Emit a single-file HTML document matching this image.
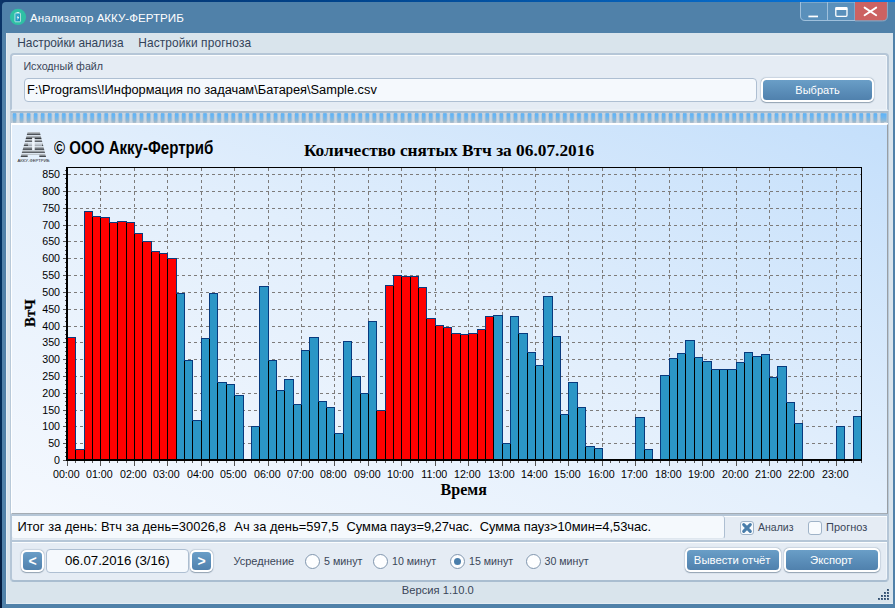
<!DOCTYPE html>
<html><head><meta charset="utf-8"><title>Анализатор АККУ-ФЕРТРИБ</title>
<style>
html,body{margin:0;padding:0;}
body{width:895px;height:608px;overflow:hidden;position:relative;font-family:"Liberation Sans",sans-serif;background:#5081a9;}
</style></head><body>
<div style="position:absolute;left:0px;top:0px;width:895px;height:608px;background:#0b3365;"></div>
<div style="position:absolute;left:2px;top:2px;width:893px;height:606px;background:#5081a9;border-top-left-radius:4px;"></div>
<div style="position:absolute;left:0px;top:0px;width:895px;height:2px;background:linear-gradient(90deg,#0a3166 0%,#00428a 36%,#0560b8 72%,#0a7ae0 100%);"></div>
<div style="position:absolute;left:0px;top:0px;width:2px;height:608px;background:linear-gradient(180deg,#0b3468 0%,#00305e 45%,#022a55 75%,#03183a 100%);"></div>
<svg style="position:absolute;left:9px;top:8px" width="18" height="18" viewBox="0 0 18 18">
<defs><linearGradient id="icB" x1="0" y1="0" x2="1" y2="1"><stop offset="0" stop-color="#38b4cf"/><stop offset="1" stop-color="#1486b8"/></linearGradient></defs>
<circle cx="9" cy="8.9" r="8.1" fill="#2fc0a4"/>
<rect x="7.6" y="4" width="2.5" height="1.4" fill="#dff6f1"/>
<rect x="5.9" y="5.1" width="5.6" height="8.7" rx="0.5" fill="url(#icB)" stroke="#c9eee8" stroke-width="0.8"/>
<path d="M9.5 7.2 L7.7 9.6 L8.8 9.7 L8.3 11.9 L10.3 9.2 L9.1 9.1 Z" fill="#fff"/>
</svg>
<div style="position:absolute;top:10px;font-size:11.6px;line-height:16px;color:#fff;white-space:pre;left:30px;">Анализатор АККУ-ФЕРТРИБ</div>
<svg style="position:absolute;left:800px;top:2px" width="90" height="21" viewBox="0 0 90 21">
<path d="M0.5 0 V14 Q0.5 18.5 5 18.5 H55 V0 Z" fill="#5a90bb" stroke="#9fc0dc" stroke-width="1"/>
<path d="M55 0 H87 V14 Q87 18.5 82.5 18.5 H55 Z" fill="#cc6262"/>
<path d="M87.4 0 V14 Q87.4 18.9 82.5 18.9 H55" fill="none" stroke="#9fb6cc" stroke-width="0.8"/>
<line x1="27.5" y1="0" x2="27.5" y2="18" stroke="#9fc0dc" stroke-width="1"/>
<rect x="8.4" y="13.6" width="9.6" height="1.7" fill="#fff"/>
<rect x="35.8" y="5.7" width="11.2" height="8.6" rx="1" fill="none" stroke="#fff" stroke-width="1.3"/>
<rect x="35.5" y="5.2" width="11.8" height="2.8" fill="#fff"/>
<path d="M64.6 5.6 L76.2 13.2 M76.2 5.6 L64.6 13.2" stroke="#fff" stroke-width="1.9" stroke-linecap="round"/>
</svg>
<div style="position:absolute;left:6px;top:33px;width:887px;height:571px;background:#d9e4ec;box-shadow:inset 1px 0 0 #e4ecf3, inset 0 -1px 0 #e4ecf3;"></div>
<div style="position:absolute;top:34px;font-size:11.9px;line-height:18px;color:#33435a;white-space:pre;letter-spacing:-0.05px;left:17.3px;">Настройки анализа</div>
<div style="position:absolute;top:34px;font-size:11.9px;line-height:18px;color:#33435a;white-space:pre;letter-spacing:0.13px;left:138.2px;">Настройки прогноза</div>
<div style="position:absolute;left:10px;top:53px;width:879px;height:58px;background:#e5ecf4;border:2px solid #b5c6d7;border-radius:4px;box-sizing:border-box;box-shadow:inset 0 1px 0 0 #fbfdfe, inset -1px 0 0 0 #f0f5fa;border-bottom-color:#eaf0f6;border-bottom-left-radius:0;border-bottom-right-radius:0;"></div>
<div style="position:absolute;top:58px;font-size:10.7px;line-height:16px;color:#3a4658;white-space:pre;left:23.4px;">Исходный файл</div>
<div style="position:absolute;left:24px;top:78px;width:733px;height:24px;background:#f5f9fd;border:1px solid #aebfd2;border-radius:4px;box-sizing:border-box;"></div>
<div style="position:absolute;top:80px;font-size:12.82px;line-height:19px;color:#000;white-space:pre;left:27px;">F:\Programs\!Информация по задачам\Батарея\Sample.csv</div>
<div style="position:absolute;left:761px;top:78px;width:113px;height:24px;background:#fff;border-radius:5px;box-shadow:0 0 1.5px rgba(90,120,150,0.7),0 0.6px 1px rgba(70,90,110,0.45);"></div>
<div style="position:absolute;left:763px;top:80px;width:109px;height:20px;background:linear-gradient(180deg,#6a9ec7 0%,#5c8fba 50%,#5081ad 100%);border-radius:3.5px;"></div>
<div style="position:absolute;top:82px;font-size:11px;line-height:16px;color:#fff;white-space:pre;left:617.5px;width:400px;text-align:center;">Выбрать</div>
<div style="position:absolute;left:10px;top:111px;width:1px;height:404px;background:#b8c9d9;"></div>
<div style="position:absolute;left:888px;top:111px;width:1px;height:404px;background:#b8c9d9;"></div>
<div style="position:absolute;left:11px;top:111px;width:877px;height:13px;background:#a9bccd;border-bottom:1px solid #b4c5d5;box-sizing:border-box;"></div>
<svg style="position:absolute;left:11px;top:111px" width="877" height="13" viewBox="0 0 877 13">
<defs><linearGradient id="sgB" x1="0" y1="0" x2="0" y2="1"><stop offset="0" stop-color="#5bb3f9"/><stop offset="0.45" stop-color="#6db6f0"/><stop offset="1" stop-color="#9ab9cc"/></linearGradient>
<pattern id="sgP" x="1.75" y="0" width="7.056" height="13" patternUnits="userSpaceOnUse"><rect x="0" y="2.3" width="3.5" height="8.6" fill="url(#sgB)"/><rect x="3.45" y="1.9" width="3.7" height="1.1" fill="#c9d5e0"/><rect x="3.45" y="10.5" width="3.7" height="1.4" fill="#c9d5e0"/><rect x="3.95" y="2" width="2.6" height="9.8" fill="#cbd6e1"/></pattern></defs>
<rect x="0.5" y="0" width="875.3" height="13" fill="url(#sgP)"/><rect x="873" y="2.3" width="2.6" height="8.6" fill="url(#sgB)"/>
</svg>
<div style="position:absolute;left:11px;top:123.4px;width:877px;height:1px;background:#fff;"></div>
<div style="position:absolute;left:11px;top:124px;width:877px;height:389.5px;background:linear-gradient(to top right,#f4f8fe 0%,#e3effc 50%,#c4dffb 100%);border:1px solid #fff;border-bottom:1px solid #a4acb4;border-right:1px solid #989ea4;box-sizing:border-box;"></div>
<svg style="position:absolute;left:0;top:0" width="895" height="608" viewBox="0 0 895 608" shape-rendering="crispEdges"><path d="M68 443.5 H861 M68 426.5 H861 M68 410.5 H861 M68 393.5 H861 M68 376.5 H861 M68 359.5 H861 M68 342.5 H861 M68 326.5 H861 M68 309.5 H861 M68 292.5 H861 M68 275.5 H861 M68 258.5 H861 M68 241.5 H861 M68 225.5 H861 M68 208.5 H861 M68 191.5 H861 M68 174.5 H861" stroke="#7d7b7a" stroke-width="1" stroke-dasharray="3 3" fill="none"/><path d="M100.5 168 V459 M134.5 168 V459 M167.5 168 V459 M201.5 168 V459 M234.5 168 V459 M268.5 168 V459 M301.5 168 V459 M334.5 168 V459 M368.5 168 V459 M401.5 168 V459 M435.5 168 V459 M468.5 168 V459 M502.5 168 V459 M535.5 168 V459 M568.5 168 V459 M602.5 168 V459 M635.5 168 V459 M669.5 168 V459 M702.5 168 V459 M736.5 168 V459 M769.5 168 V459 M802.5 168 V459 M836.5 168 V459" stroke="#7d7b7a" stroke-width="1" stroke-dasharray="3 3" fill="none"/><rect x="67.5" y="337.5" width="8" height="122" fill="#ff0000" stroke="#083a7e" stroke-width="1"/><rect x="75.5" y="449.5" width="9" height="10" fill="#ff0000" stroke="#083a7e" stroke-width="1"/><rect x="84.5" y="211.5" width="8" height="248" fill="#ff0000" stroke="#083a7e" stroke-width="1"/><rect x="92.5" y="216.5" width="8" height="243" fill="#ff0000" stroke="#083a7e" stroke-width="1"/><rect x="100.5" y="217.5" width="9" height="242" fill="#ff0000" stroke="#083a7e" stroke-width="1"/><rect x="109.5" y="222.5" width="8" height="237" fill="#ff0000" stroke="#083a7e" stroke-width="1"/><rect x="117.5" y="221.5" width="9" height="238" fill="#ff0000" stroke="#083a7e" stroke-width="1"/><rect x="126.5" y="222.5" width="8" height="237" fill="#ff0000" stroke="#083a7e" stroke-width="1"/><rect x="134.5" y="233.5" width="8" height="226" fill="#ff0000" stroke="#083a7e" stroke-width="1"/><rect x="142.5" y="241.5" width="9" height="218" fill="#ff0000" stroke="#083a7e" stroke-width="1"/><rect x="151.5" y="251.5" width="8" height="208" fill="#ff0000" stroke="#083a7e" stroke-width="1"/><rect x="159.5" y="253.5" width="8" height="206" fill="#ff0000" stroke="#083a7e" stroke-width="1"/><rect x="167.5" y="258.5" width="9" height="201" fill="#ff0000" stroke="#083a7e" stroke-width="1"/><rect x="176.5" y="293.5" width="8" height="166" fill="#2b96c6" stroke="#083a7e" stroke-width="1"/><rect x="184.5" y="360.5" width="8" height="99" fill="#2b96c6" stroke="#083a7e" stroke-width="1"/><rect x="192.5" y="420.5" width="9" height="39" fill="#2b96c6" stroke="#083a7e" stroke-width="1"/><rect x="201.5" y="338.5" width="8" height="121" fill="#2b96c6" stroke="#083a7e" stroke-width="1"/><rect x="209.5" y="293.5" width="8" height="166" fill="#2b96c6" stroke="#083a7e" stroke-width="1"/><rect x="217.5" y="382.5" width="9" height="77" fill="#2b96c6" stroke="#083a7e" stroke-width="1"/><rect x="226.5" y="384.5" width="8" height="75" fill="#2b96c6" stroke="#083a7e" stroke-width="1"/><rect x="234.5" y="395.5" width="9" height="64" fill="#2b96c6" stroke="#083a7e" stroke-width="1"/><rect x="251.5" y="426.5" width="8" height="33" fill="#2b96c6" stroke="#083a7e" stroke-width="1"/><rect x="259.5" y="286.5" width="9" height="173" fill="#2b96c6" stroke="#083a7e" stroke-width="1"/><rect x="268.5" y="360.5" width="8" height="99" fill="#2b96c6" stroke="#083a7e" stroke-width="1"/><rect x="276.5" y="390.5" width="8" height="69" fill="#2b96c6" stroke="#083a7e" stroke-width="1"/><rect x="284.5" y="379.5" width="9" height="80" fill="#2b96c6" stroke="#083a7e" stroke-width="1"/><rect x="293.5" y="404.5" width="8" height="55" fill="#2b96c6" stroke="#083a7e" stroke-width="1"/><rect x="301.5" y="350.5" width="8" height="109" fill="#2b96c6" stroke="#083a7e" stroke-width="1"/><rect x="309.5" y="337.5" width="9" height="122" fill="#2b96c6" stroke="#083a7e" stroke-width="1"/><rect x="318.5" y="401.5" width="8" height="58" fill="#2b96c6" stroke="#083a7e" stroke-width="1"/><rect x="326.5" y="407.5" width="8" height="52" fill="#2b96c6" stroke="#083a7e" stroke-width="1"/><rect x="334.5" y="433.5" width="9" height="26" fill="#2b96c6" stroke="#083a7e" stroke-width="1"/><rect x="343.5" y="341.5" width="8" height="118" fill="#2b96c6" stroke="#083a7e" stroke-width="1"/><rect x="351.5" y="376.5" width="9" height="83" fill="#2b96c6" stroke="#083a7e" stroke-width="1"/><rect x="360.5" y="393.5" width="8" height="66" fill="#2b96c6" stroke="#083a7e" stroke-width="1"/><rect x="368.5" y="321.5" width="8" height="138" fill="#2b96c6" stroke="#083a7e" stroke-width="1"/><rect x="376.5" y="410.5" width="9" height="49" fill="#ff0000" stroke="#083a7e" stroke-width="1"/><rect x="385.5" y="285.5" width="8" height="174" fill="#ff0000" stroke="#083a7e" stroke-width="1"/><rect x="393.5" y="275.5" width="8" height="184" fill="#ff0000" stroke="#083a7e" stroke-width="1"/><rect x="401.5" y="276.5" width="9" height="183" fill="#ff0000" stroke="#083a7e" stroke-width="1"/><rect x="410.5" y="276.5" width="8" height="183" fill="#ff0000" stroke="#083a7e" stroke-width="1"/><rect x="418.5" y="287.5" width="8" height="172" fill="#ff0000" stroke="#083a7e" stroke-width="1"/><rect x="426.5" y="318.5" width="9" height="141" fill="#ff0000" stroke="#083a7e" stroke-width="1"/><rect x="435.5" y="325.5" width="8" height="134" fill="#ff0000" stroke="#083a7e" stroke-width="1"/><rect x="443.5" y="327.5" width="8" height="132" fill="#ff0000" stroke="#083a7e" stroke-width="1"/><rect x="451.5" y="333.5" width="9" height="126" fill="#ff0000" stroke="#083a7e" stroke-width="1"/><rect x="460.5" y="334.5" width="8" height="125" fill="#ff0000" stroke="#083a7e" stroke-width="1"/><rect x="468.5" y="333.5" width="9" height="126" fill="#ff0000" stroke="#083a7e" stroke-width="1"/><rect x="477.5" y="329.5" width="8" height="130" fill="#ff0000" stroke="#083a7e" stroke-width="1"/><rect x="485.5" y="316.5" width="8" height="143" fill="#ff0000" stroke="#083a7e" stroke-width="1"/><rect x="493.5" y="315.5" width="9" height="144" fill="#2b96c6" stroke="#083a7e" stroke-width="1"/><rect x="502.5" y="443.5" width="8" height="16" fill="#2b96c6" stroke="#083a7e" stroke-width="1"/><rect x="510.5" y="316.5" width="8" height="143" fill="#2b96c6" stroke="#083a7e" stroke-width="1"/><rect x="518.5" y="333.5" width="9" height="126" fill="#2b96c6" stroke="#083a7e" stroke-width="1"/><rect x="527.5" y="352.5" width="8" height="107" fill="#2b96c6" stroke="#083a7e" stroke-width="1"/><rect x="535.5" y="365.5" width="8" height="94" fill="#2b96c6" stroke="#083a7e" stroke-width="1"/><rect x="543.5" y="296.5" width="9" height="163" fill="#2b96c6" stroke="#083a7e" stroke-width="1"/><rect x="552.5" y="336.5" width="8" height="123" fill="#2b96c6" stroke="#083a7e" stroke-width="1"/><rect x="560.5" y="414.5" width="8" height="45" fill="#2b96c6" stroke="#083a7e" stroke-width="1"/><rect x="568.5" y="382.5" width="9" height="77" fill="#2b96c6" stroke="#083a7e" stroke-width="1"/><rect x="577.5" y="407.5" width="8" height="52" fill="#2b96c6" stroke="#083a7e" stroke-width="1"/><rect x="585.5" y="446.5" width="9" height="13" fill="#2b96c6" stroke="#083a7e" stroke-width="1"/><rect x="594.5" y="448.5" width="8" height="11" fill="#2b96c6" stroke="#083a7e" stroke-width="1"/><rect x="635.5" y="417.5" width="9" height="42" fill="#2b96c6" stroke="#083a7e" stroke-width="1"/><rect x="644.5" y="449.5" width="8" height="10" fill="#2b96c6" stroke="#083a7e" stroke-width="1"/><rect x="660.5" y="375.5" width="9" height="84" fill="#2b96c6" stroke="#083a7e" stroke-width="1"/><rect x="669.5" y="358.5" width="8" height="101" fill="#2b96c6" stroke="#083a7e" stroke-width="1"/><rect x="677.5" y="353.5" width="8" height="106" fill="#2b96c6" stroke="#083a7e" stroke-width="1"/><rect x="685.5" y="340.5" width="9" height="119" fill="#2b96c6" stroke="#083a7e" stroke-width="1"/><rect x="694.5" y="357.5" width="8" height="102" fill="#2b96c6" stroke="#083a7e" stroke-width="1"/><rect x="702.5" y="361.5" width="9" height="98" fill="#2b96c6" stroke="#083a7e" stroke-width="1"/><rect x="711.5" y="369.5" width="8" height="90" fill="#2b96c6" stroke="#083a7e" stroke-width="1"/><rect x="719.5" y="369.5" width="8" height="90" fill="#2b96c6" stroke="#083a7e" stroke-width="1"/><rect x="727.5" y="369.5" width="9" height="90" fill="#2b96c6" stroke="#083a7e" stroke-width="1"/><rect x="736.5" y="362.5" width="8" height="97" fill="#2b96c6" stroke="#083a7e" stroke-width="1"/><rect x="744.5" y="352.5" width="8" height="107" fill="#2b96c6" stroke="#083a7e" stroke-width="1"/><rect x="752.5" y="356.5" width="9" height="103" fill="#2b96c6" stroke="#083a7e" stroke-width="1"/><rect x="761.5" y="354.5" width="8" height="105" fill="#2b96c6" stroke="#083a7e" stroke-width="1"/><rect x="769.5" y="377.5" width="8" height="82" fill="#2b96c6" stroke="#083a7e" stroke-width="1"/><rect x="777.5" y="366.5" width="9" height="93" fill="#2b96c6" stroke="#083a7e" stroke-width="1"/><rect x="786.5" y="402.5" width="8" height="57" fill="#2b96c6" stroke="#083a7e" stroke-width="1"/><rect x="794.5" y="423.5" width="8" height="36" fill="#2b96c6" stroke="#083a7e" stroke-width="1"/><rect x="836.5" y="426.5" width="8" height="33" fill="#2b96c6" stroke="#083a7e" stroke-width="1"/><rect x="853.5" y="416.5" width="8" height="43" fill="#2b96c6" stroke="#083a7e" stroke-width="1"/><line x1="75.5" y1="450" x2="75.5" y2="459" stroke="#000" stroke-width="1"/><line x1="84.5" y1="450" x2="84.5" y2="459" stroke="#000" stroke-width="1"/><line x1="92.5" y1="217" x2="92.5" y2="459" stroke="#000" stroke-width="1"/><line x1="100.5" y1="218" x2="100.5" y2="459" stroke="#000" stroke-width="1"/><line x1="109.5" y1="223" x2="109.5" y2="459" stroke="#000" stroke-width="1"/><line x1="117.5" y1="223" x2="117.5" y2="459" stroke="#000" stroke-width="1"/><line x1="126.5" y1="223" x2="126.5" y2="459" stroke="#000" stroke-width="1"/><line x1="134.5" y1="234" x2="134.5" y2="459" stroke="#000" stroke-width="1"/><line x1="142.5" y1="242" x2="142.5" y2="459" stroke="#000" stroke-width="1"/><line x1="151.5" y1="252" x2="151.5" y2="459" stroke="#000" stroke-width="1"/><line x1="159.5" y1="254" x2="159.5" y2="459" stroke="#000" stroke-width="1"/><line x1="167.5" y1="259" x2="167.5" y2="459" stroke="#000" stroke-width="1"/><line x1="176.5" y1="294" x2="176.5" y2="459" stroke="#000" stroke-width="1"/><line x1="184.5" y1="361" x2="184.5" y2="459" stroke="#000" stroke-width="1"/><line x1="192.5" y1="421" x2="192.5" y2="459" stroke="#000" stroke-width="1"/><line x1="201.5" y1="421" x2="201.5" y2="459" stroke="#000" stroke-width="1"/><line x1="209.5" y1="339" x2="209.5" y2="459" stroke="#000" stroke-width="1"/><line x1="217.5" y1="383" x2="217.5" y2="459" stroke="#000" stroke-width="1"/><line x1="226.5" y1="385" x2="226.5" y2="459" stroke="#000" stroke-width="1"/><line x1="234.5" y1="396" x2="234.5" y2="459" stroke="#000" stroke-width="1"/><line x1="259.5" y1="427" x2="259.5" y2="459" stroke="#000" stroke-width="1"/><line x1="268.5" y1="361" x2="268.5" y2="459" stroke="#000" stroke-width="1"/><line x1="276.5" y1="391" x2="276.5" y2="459" stroke="#000" stroke-width="1"/><line x1="284.5" y1="391" x2="284.5" y2="459" stroke="#000" stroke-width="1"/><line x1="293.5" y1="405" x2="293.5" y2="459" stroke="#000" stroke-width="1"/><line x1="301.5" y1="405" x2="301.5" y2="459" stroke="#000" stroke-width="1"/><line x1="309.5" y1="351" x2="309.5" y2="459" stroke="#000" stroke-width="1"/><line x1="318.5" y1="402" x2="318.5" y2="459" stroke="#000" stroke-width="1"/><line x1="326.5" y1="408" x2="326.5" y2="459" stroke="#000" stroke-width="1"/><line x1="334.5" y1="434" x2="334.5" y2="459" stroke="#000" stroke-width="1"/><line x1="343.5" y1="434" x2="343.5" y2="459" stroke="#000" stroke-width="1"/><line x1="351.5" y1="377" x2="351.5" y2="459" stroke="#000" stroke-width="1"/><line x1="360.5" y1="394" x2="360.5" y2="459" stroke="#000" stroke-width="1"/><line x1="368.5" y1="394" x2="368.5" y2="459" stroke="#000" stroke-width="1"/><line x1="376.5" y1="411" x2="376.5" y2="459" stroke="#000" stroke-width="1"/><line x1="385.5" y1="411" x2="385.5" y2="459" stroke="#000" stroke-width="1"/><line x1="393.5" y1="286" x2="393.5" y2="459" stroke="#000" stroke-width="1"/><line x1="401.5" y1="277" x2="401.5" y2="459" stroke="#000" stroke-width="1"/><line x1="410.5" y1="277" x2="410.5" y2="459" stroke="#000" stroke-width="1"/><line x1="418.5" y1="288" x2="418.5" y2="459" stroke="#000" stroke-width="1"/><line x1="426.5" y1="319" x2="426.5" y2="459" stroke="#000" stroke-width="1"/><line x1="435.5" y1="326" x2="435.5" y2="459" stroke="#000" stroke-width="1"/><line x1="443.5" y1="328" x2="443.5" y2="459" stroke="#000" stroke-width="1"/><line x1="451.5" y1="334" x2="451.5" y2="459" stroke="#000" stroke-width="1"/><line x1="460.5" y1="335" x2="460.5" y2="459" stroke="#000" stroke-width="1"/><line x1="468.5" y1="335" x2="468.5" y2="459" stroke="#000" stroke-width="1"/><line x1="477.5" y1="334" x2="477.5" y2="459" stroke="#000" stroke-width="1"/><line x1="485.5" y1="330" x2="485.5" y2="459" stroke="#000" stroke-width="1"/><line x1="493.5" y1="317" x2="493.5" y2="459" stroke="#000" stroke-width="1"/><line x1="502.5" y1="444" x2="502.5" y2="459" stroke="#000" stroke-width="1"/><line x1="510.5" y1="444" x2="510.5" y2="459" stroke="#000" stroke-width="1"/><line x1="518.5" y1="334" x2="518.5" y2="459" stroke="#000" stroke-width="1"/><line x1="527.5" y1="353" x2="527.5" y2="459" stroke="#000" stroke-width="1"/><line x1="535.5" y1="366" x2="535.5" y2="459" stroke="#000" stroke-width="1"/><line x1="543.5" y1="366" x2="543.5" y2="459" stroke="#000" stroke-width="1"/><line x1="552.5" y1="337" x2="552.5" y2="459" stroke="#000" stroke-width="1"/><line x1="560.5" y1="415" x2="560.5" y2="459" stroke="#000" stroke-width="1"/><line x1="568.5" y1="415" x2="568.5" y2="459" stroke="#000" stroke-width="1"/><line x1="577.5" y1="408" x2="577.5" y2="459" stroke="#000" stroke-width="1"/><line x1="585.5" y1="447" x2="585.5" y2="459" stroke="#000" stroke-width="1"/><line x1="594.5" y1="449" x2="594.5" y2="459" stroke="#000" stroke-width="1"/><line x1="644.5" y1="450" x2="644.5" y2="459" stroke="#000" stroke-width="1"/><line x1="669.5" y1="376" x2="669.5" y2="459" stroke="#000" stroke-width="1"/><line x1="677.5" y1="359" x2="677.5" y2="459" stroke="#000" stroke-width="1"/><line x1="685.5" y1="354" x2="685.5" y2="459" stroke="#000" stroke-width="1"/><line x1="694.5" y1="358" x2="694.5" y2="459" stroke="#000" stroke-width="1"/><line x1="702.5" y1="362" x2="702.5" y2="459" stroke="#000" stroke-width="1"/><line x1="711.5" y1="370" x2="711.5" y2="459" stroke="#000" stroke-width="1"/><line x1="719.5" y1="370" x2="719.5" y2="459" stroke="#000" stroke-width="1"/><line x1="727.5" y1="370" x2="727.5" y2="459" stroke="#000" stroke-width="1"/><line x1="736.5" y1="370" x2="736.5" y2="459" stroke="#000" stroke-width="1"/><line x1="744.5" y1="363" x2="744.5" y2="459" stroke="#000" stroke-width="1"/><line x1="752.5" y1="357" x2="752.5" y2="459" stroke="#000" stroke-width="1"/><line x1="761.5" y1="357" x2="761.5" y2="459" stroke="#000" stroke-width="1"/><line x1="769.5" y1="378" x2="769.5" y2="459" stroke="#000" stroke-width="1"/><line x1="777.5" y1="378" x2="777.5" y2="459" stroke="#000" stroke-width="1"/><line x1="786.5" y1="403" x2="786.5" y2="459" stroke="#000" stroke-width="1"/><line x1="794.5" y1="424" x2="794.5" y2="459" stroke="#000" stroke-width="1"/><rect x="66" y="167" width="2" height="294" fill="#000"/><rect x="66" y="459" width="796" height="2" fill="#000"/><rect x="66" y="167" width="796" height="1" fill="#000"/><rect x="861" y="167" width="1" height="294" fill="#000"/><path d="M63 460.5 H66 M63 443.5 H66 M63 426.5 H66 M63 410.5 H66 M63 393.5 H66 M63 376.5 H66 M63 359.5 H66 M63 342.5 H66 M63 326.5 H66 M63 309.5 H66 M63 292.5 H66 M63 275.5 H66 M63 258.5 H66 M63 241.5 H66 M63 225.5 H66 M63 208.5 H66 M63 191.5 H66 M63 174.5 H66 M65 456.5 H66 M65 452.5 H66 M65 447.5 H66 M65 439.5 H66 M65 435.5 H66 M65 431.5 H66 M65 422.5 H66 M65 418.5 H66 M65 414.5 H66 M65 405.5 H66 M65 401.5 H66 M65 397.5 H66 M65 389.5 H66 M65 384.5 H66 M65 380.5 H66 M65 372.5 H66 M65 368.5 H66 M65 363.5 H66 M65 355.5 H66 M65 351.5 H66 M65 347.5 H66 M65 338.5 H66 M65 334.5 H66 M65 330.5 H66 M65 321.5 H66 M65 317.5 H66 M65 313.5 H66 M65 305.5 H66 M65 300.5 H66 M65 296.5 H66 M65 288.5 H66 M65 283.5 H66 M65 279.5 H66 M65 271.5 H66 M65 267.5 H66 M65 262.5 H66 M65 254.5 H66 M65 250.5 H66 M65 246.5 H66 M65 237.5 H66 M65 233.5 H66 M65 229.5 H66 M65 220.5 H66 M65 216.5 H66 M65 212.5 H66 M65 204.5 H66 M65 199.5 H66 M65 195.5 H66 M65 187.5 H66 M65 183.5 H66 M65 178.5 H66 M65 170.5 H66 M67.5 461 V466 M75.5 461 V463 M84.5 461 V463 M92.5 461 V463 M100.5 461 V466 M109.5 461 V463 M117.5 461 V463 M126.5 461 V463 M134.5 461 V466 M142.5 461 V463 M151.5 461 V463 M159.5 461 V463 M167.5 461 V466 M176.5 461 V463 M184.5 461 V463 M192.5 461 V463 M201.5 461 V466 M209.5 461 V463 M217.5 461 V463 M226.5 461 V463 M234.5 461 V466 M243.5 461 V463 M251.5 461 V463 M259.5 461 V463 M268.5 461 V466 M276.5 461 V463 M284.5 461 V463 M293.5 461 V463 M301.5 461 V466 M309.5 461 V463 M318.5 461 V463 M326.5 461 V463 M334.5 461 V466 M343.5 461 V463 M351.5 461 V463 M360.5 461 V463 M368.5 461 V466 M376.5 461 V463 M385.5 461 V463 M393.5 461 V463 M401.5 461 V466 M410.5 461 V463 M418.5 461 V463 M426.5 461 V463 M435.5 461 V466 M443.5 461 V463 M451.5 461 V463 M460.5 461 V463 M468.5 461 V466 M477.5 461 V463 M485.5 461 V463 M493.5 461 V463 M502.5 461 V466 M510.5 461 V463 M518.5 461 V463 M527.5 461 V463 M535.5 461 V466 M543.5 461 V463 M552.5 461 V463 M560.5 461 V463 M568.5 461 V466 M577.5 461 V463 M585.5 461 V463 M594.5 461 V463 M602.5 461 V466 M610.5 461 V463 M619.5 461 V463 M627.5 461 V463 M635.5 461 V466 M644.5 461 V463 M652.5 461 V463 M660.5 461 V463 M669.5 461 V466 M677.5 461 V463 M685.5 461 V463 M694.5 461 V463 M702.5 461 V466 M711.5 461 V463 M719.5 461 V463 M727.5 461 V463 M736.5 461 V466 M744.5 461 V463 M752.5 461 V463 M761.5 461 V463 M769.5 461 V466 M777.5 461 V463 M786.5 461 V463 M794.5 461 V463 M802.5 461 V466 M811.5 461 V463 M819.5 461 V463 M828.5 461 V463 M836.5 461 V466 M844.5 461 V463 M853.5 461 V463 M861.5 461 V463" stroke="#555" stroke-width="1" fill="none"/></svg>
<div style="position:absolute;top:452px;font-size:10.67px;line-height:16px;color:#000;white-space:pre;left:-340px;width:400px;text-align:right;">0</div>
<div style="position:absolute;top:435px;font-size:10.67px;line-height:16px;color:#000;white-space:pre;left:-340px;width:400px;text-align:right;">50</div>
<div style="position:absolute;top:418px;font-size:10.67px;line-height:16px;color:#000;white-space:pre;left:-340px;width:400px;text-align:right;">100</div>
<div style="position:absolute;top:402px;font-size:10.67px;line-height:16px;color:#000;white-space:pre;left:-340px;width:400px;text-align:right;">150</div>
<div style="position:absolute;top:385px;font-size:10.67px;line-height:16px;color:#000;white-space:pre;left:-340px;width:400px;text-align:right;">200</div>
<div style="position:absolute;top:368px;font-size:10.67px;line-height:16px;color:#000;white-space:pre;left:-340px;width:400px;text-align:right;">250</div>
<div style="position:absolute;top:351px;font-size:10.67px;line-height:16px;color:#000;white-space:pre;left:-340px;width:400px;text-align:right;">300</div>
<div style="position:absolute;top:334px;font-size:10.67px;line-height:16px;color:#000;white-space:pre;left:-340px;width:400px;text-align:right;">350</div>
<div style="position:absolute;top:318px;font-size:10.67px;line-height:16px;color:#000;white-space:pre;left:-340px;width:400px;text-align:right;">400</div>
<div style="position:absolute;top:301px;font-size:10.67px;line-height:16px;color:#000;white-space:pre;left:-340px;width:400px;text-align:right;">450</div>
<div style="position:absolute;top:284px;font-size:10.67px;line-height:16px;color:#000;white-space:pre;left:-340px;width:400px;text-align:right;">500</div>
<div style="position:absolute;top:267px;font-size:10.67px;line-height:16px;color:#000;white-space:pre;left:-340px;width:400px;text-align:right;">550</div>
<div style="position:absolute;top:250px;font-size:10.67px;line-height:16px;color:#000;white-space:pre;left:-340px;width:400px;text-align:right;">600</div>
<div style="position:absolute;top:233px;font-size:10.67px;line-height:16px;color:#000;white-space:pre;left:-340px;width:400px;text-align:right;">650</div>
<div style="position:absolute;top:217px;font-size:10.67px;line-height:16px;color:#000;white-space:pre;left:-340px;width:400px;text-align:right;">700</div>
<div style="position:absolute;top:200px;font-size:10.67px;line-height:16px;color:#000;white-space:pre;left:-340px;width:400px;text-align:right;">750</div>
<div style="position:absolute;top:183px;font-size:10.67px;line-height:16px;color:#000;white-space:pre;left:-340px;width:400px;text-align:right;">800</div>
<div style="position:absolute;top:166px;font-size:10.67px;line-height:16px;color:#000;white-space:pre;left:-340px;width:400px;text-align:right;">850</div>
<div style="position:absolute;top:466px;font-size:10.67px;line-height:16px;color:#000;white-space:pre;left:-133.7px;width:400px;text-align:center;">00:00</div>
<div style="position:absolute;top:466px;font-size:10.67px;line-height:16px;color:#000;white-space:pre;left:-100.7px;width:400px;text-align:center;">01:00</div>
<div style="position:absolute;top:466px;font-size:10.67px;line-height:16px;color:#000;white-space:pre;left:-66.7px;width:400px;text-align:center;">02:00</div>
<div style="position:absolute;top:466px;font-size:10.67px;line-height:16px;color:#000;white-space:pre;left:-33.7px;width:400px;text-align:center;">03:00</div>
<div style="position:absolute;top:466px;font-size:10.67px;line-height:16px;color:#000;white-space:pre;left:0.3px;width:400px;text-align:center;">04:00</div>
<div style="position:absolute;top:466px;font-size:10.67px;line-height:16px;color:#000;white-space:pre;left:33.3px;width:400px;text-align:center;">05:00</div>
<div style="position:absolute;top:466px;font-size:10.67px;line-height:16px;color:#000;white-space:pre;left:67.3px;width:400px;text-align:center;">06:00</div>
<div style="position:absolute;top:466px;font-size:10.67px;line-height:16px;color:#000;white-space:pre;left:100.3px;width:400px;text-align:center;">07:00</div>
<div style="position:absolute;top:466px;font-size:10.67px;line-height:16px;color:#000;white-space:pre;left:133.3px;width:400px;text-align:center;">08:00</div>
<div style="position:absolute;top:466px;font-size:10.67px;line-height:16px;color:#000;white-space:pre;left:167.3px;width:400px;text-align:center;">09:00</div>
<div style="position:absolute;top:466px;font-size:10.67px;line-height:16px;color:#000;white-space:pre;left:200.3px;width:400px;text-align:center;">10:00</div>
<div style="position:absolute;top:466px;font-size:10.67px;line-height:16px;color:#000;white-space:pre;left:234.3px;width:400px;text-align:center;">11:00</div>
<div style="position:absolute;top:466px;font-size:10.67px;line-height:16px;color:#000;white-space:pre;left:267.3px;width:400px;text-align:center;">12:00</div>
<div style="position:absolute;top:466px;font-size:10.67px;line-height:16px;color:#000;white-space:pre;left:301.3px;width:400px;text-align:center;">13:00</div>
<div style="position:absolute;top:466px;font-size:10.67px;line-height:16px;color:#000;white-space:pre;left:334.3px;width:400px;text-align:center;">14:00</div>
<div style="position:absolute;top:466px;font-size:10.67px;line-height:16px;color:#000;white-space:pre;left:367.3px;width:400px;text-align:center;">15:00</div>
<div style="position:absolute;top:466px;font-size:10.67px;line-height:16px;color:#000;white-space:pre;left:401.3px;width:400px;text-align:center;">16:00</div>
<div style="position:absolute;top:466px;font-size:10.67px;line-height:16px;color:#000;white-space:pre;left:434.3px;width:400px;text-align:center;">17:00</div>
<div style="position:absolute;top:466px;font-size:10.67px;line-height:16px;color:#000;white-space:pre;left:468.3px;width:400px;text-align:center;">18:00</div>
<div style="position:absolute;top:466px;font-size:10.67px;line-height:16px;color:#000;white-space:pre;left:501.3px;width:400px;text-align:center;">19:00</div>
<div style="position:absolute;top:466px;font-size:10.67px;line-height:16px;color:#000;white-space:pre;left:535.3px;width:400px;text-align:center;">20:00</div>
<div style="position:absolute;top:466px;font-size:10.67px;line-height:16px;color:#000;white-space:pre;left:568.3px;width:400px;text-align:center;">21:00</div>
<div style="position:absolute;top:466px;font-size:10.67px;line-height:16px;color:#000;white-space:pre;left:601.3px;width:400px;text-align:center;">22:00</div>
<div style="position:absolute;top:466px;font-size:10.67px;line-height:16px;color:#000;white-space:pre;left:635.3px;width:400px;text-align:center;">23:00</div>
<div style="position:absolute;top:139px;font-size:17.33px;line-height:23px;color:#000;white-space:pre;font-family:'Liberation Serif',serif;font-weight:700;left:249px;width:400px;text-align:center;">Количество снятых Втч за 06.07.2016</div>
<div style="position:absolute;top:479px;font-size:16px;line-height:21px;color:#000;white-space:pre;font-family:'Liberation Serif',serif;font-weight:700;left:263.7px;width:400px;text-align:center;">Время</div>
<div style="position:absolute;left:-70px;top:303.8px;width:200px;text-align:center;font-family:'Liberation Serif',serif;font-weight:700;font-size:14.67px;line-height:18px;transform:rotate(-90deg);transform-origin:50% 50%;white-space:pre;-webkit-text-stroke:0.25px #000;">ВтЧ</div>
<svg style="position:absolute;left:17px;top:130px" width="36" height="34" viewBox="0 0 36 34"><defs><clipPath id="lgA"><path d="M10.6 1.9 H22.8 L29.2 27.4 H22.3 V24.8 H10.7 V27.4 H3.5 Z"/></clipPath><linearGradient id="lgB" x1="0" y1="0" x2="0" y2="1"><stop offset="0" stop-color="#ccd2d8"/><stop offset="0.45" stop-color="#8a9096"/><stop offset="0.82" stop-color="#33383e"/><stop offset="0.83" stop-color="#dfe9f4"/><stop offset="1" stop-color="#dfe9f4"/></linearGradient></defs><g clip-path="url(#lgA)"><rect x="0" y="1.90" width="36" height="3.65" fill="url(#lgB)"/><rect x="0" y="5.55" width="36" height="3.65" fill="url(#lgB)"/><rect x="0" y="9.20" width="36" height="3.65" fill="url(#lgB)"/><rect x="0" y="12.85" width="36" height="3.65" fill="url(#lgB)"/><rect x="0" y="16.50" width="36" height="3.65" fill="url(#lgB)"/><rect x="0" y="20.15" width="36" height="3.65" fill="url(#lgB)"/><rect x="0" y="23.80" width="36" height="3.65" fill="url(#lgB)"/><rect x="11" y="12.8" width="14" height="3.2" fill="#e6eef8" opacity="0.6"/><rect x="15.1" y="7.7" width="2.6" height="12.5" fill="#eef4fb"/></g><text x="16.5" y="32.4" font-size="4.2" font-family="Liberation Sans" font-weight="400" text-anchor="middle" fill="#222" textLength="32" lengthAdjust="spacingAndGlyphs">АККУ-ФЕРТРИБ</text></svg>
<div style="position:absolute;top:135.5px;font-size:18px;line-height:24px;color:#000;white-space:pre;font-weight:700;left:54px;transform:scaleX(0.837);transform-origin:0 50%;">© ООО Акку-Фертриб</div>
<div style="position:absolute;left:10px;top:514px;width:879px;height:27px;background:#e5ecf4;border:2px solid #b5c6d7;border-radius:4px;box-sizing:border-box;box-shadow:inset 0 1px 0 0 #fbfdfe, inset -1px 0 0 0 #f0f5fa;border-radius:0;border-bottom-width:1px;"></div>
<div style="position:absolute;left:12px;top:516px;width:713px;height:23px;background:#f5f9fd;border-right:1px solid #aebfd2;border-bottom:1px solid #dfe7ef;border-radius:3px;box-sizing:border-box;"></div>
<div style="position:absolute;top:517px;font-size:12.9px;line-height:19px;color:#000;white-space:pre;letter-spacing:0.06px;left:17.4px;">Итог за день: Втч за день=30026,8</div>
<div style="position:absolute;top:517px;font-size:12.9px;line-height:19px;color:#000;white-space:pre;letter-spacing:0.03px;left:234.3px;">Ач за день=597,5</div>
<div style="position:absolute;top:517px;font-size:12.9px;line-height:19px;color:#000;white-space:pre;letter-spacing:-0.06px;left:346.6px;">Сумма пауз=9,27час.</div>
<div style="position:absolute;top:517px;font-size:12.9px;line-height:19px;color:#000;white-space:pre;letter-spacing:-0.03px;left:479.8px;">Сумма пауз>10мин=4,53час.</div>
<div style="position:absolute;left:740px;top:521px;width:14px;height:14px;background:#f8fbfe;border:1px solid #9fb3c8;border-radius:3px;box-sizing:border-box;"></div>
<svg style="position:absolute;left:740px;top:521px" width="14" height="14" viewBox="0 0 14 14"><path d="M3.7 3.7 L10.3 10.3 M10.3 3.7 L3.7 10.3" stroke="#4a7eab" stroke-width="3.1" stroke-linecap="round"/></svg>
<div style="position:absolute;top:519px;font-size:10.5px;line-height:16px;color:#3a4658;white-space:pre;left:758px;">Анализ</div>
<div style="position:absolute;left:808px;top:521px;width:14px;height:14px;background:#f8fbfe;border:1px solid #9fb3c8;border-radius:3px;box-sizing:border-box;"></div>
<div style="position:absolute;top:519px;font-size:11px;line-height:16px;color:#3a4658;white-space:pre;left:826px;">Прогноз</div>
<div style="position:absolute;left:10px;top:540px;width:879px;height:42px;background:#e5ecf4;border:2px solid #b5c6d7;border-radius:4px;box-sizing:border-box;box-shadow:inset 0 1px 0 0 #fbfdfe, inset -1px 0 0 0 #f0f5fa;border-top-left-radius:0;border-top-right-radius:0;border-bottom-color:#a9bdd0;"></div>
<div style="position:absolute;left:21px;top:550px;width:23px;height:22px;background:#fff;border-radius:5px;box-shadow:0 0 1.5px rgba(90,120,150,0.7),0 0.6px 1px rgba(70,90,110,0.45);"></div>
<div style="position:absolute;left:23px;top:552px;width:19px;height:18px;background:linear-gradient(180deg,#6a9ec7 0%,#5c8fba 50%,#5081ad 100%);border-radius:3.5px;"></div>
<div style="position:absolute;top:551px;font-size:14px;line-height:20px;color:#fff;white-space:pre;font-weight:700;left:-167.5px;width:400px;text-align:center;">&lt;</div>
<div style="position:absolute;left:46px;top:549px;width:143px;height:24px;background:#f5f9fd;border:1px solid #aebfd2;border-radius:4px;box-sizing:border-box;"></div>
<div style="position:absolute;top:551px;font-size:13.25px;line-height:19px;color:#000;white-space:pre;left:-82.7px;width:400px;text-align:center;">06.07.2016 (3/16)</div>
<div style="position:absolute;left:190px;top:550px;width:23px;height:22px;background:#fff;border-radius:5px;box-shadow:0 0 1.5px rgba(90,120,150,0.7),0 0.6px 1px rgba(70,90,110,0.45);"></div>
<div style="position:absolute;left:192px;top:552px;width:19px;height:18px;background:linear-gradient(180deg,#6a9ec7 0%,#5c8fba 50%,#5081ad 100%);border-radius:3.5px;"></div>
<div style="position:absolute;top:551px;font-size:14px;line-height:20px;color:#fff;white-space:pre;font-weight:700;left:1.5px;width:400px;text-align:center;">&gt;</div>
<div style="position:absolute;top:553px;font-size:11px;line-height:16px;color:#3a4658;white-space:pre;left:233.5px;">Усреднение</div>
<div style="position:absolute;left:305.0px;top:554.0px;width:15px;height:15px;background:#fdfeff;border:1.5px solid #8096ae;border-radius:50%;box-sizing:border-box;"></div>
<div style="position:absolute;top:553px;font-size:10.7px;line-height:16px;color:#3a4658;white-space:pre;left:324px;">5 минут</div>
<div style="position:absolute;left:373.0px;top:554.0px;width:15px;height:15px;background:#fdfeff;border:1.5px solid #8096ae;border-radius:50%;box-sizing:border-box;"></div>
<div style="position:absolute;top:553px;font-size:10.65px;line-height:16px;color:#3a4658;white-space:pre;left:392px;">10 минут</div>
<div style="position:absolute;left:450.0px;top:554.0px;width:15px;height:15px;background:#fdfeff;border:1.5px solid #8096ae;border-radius:50%;box-sizing:border-box;"></div>
<div style="position:absolute;left:454.0px;top:558.0px;width:7px;height:7px;background:#4a7eab;border-radius:50%;"></div>
<div style="position:absolute;top:553px;font-size:10.65px;line-height:16px;color:#3a4658;white-space:pre;left:469px;">15 минут</div>
<div style="position:absolute;left:525.5px;top:554.0px;width:15px;height:15px;background:#fdfeff;border:1.5px solid #8096ae;border-radius:50%;box-sizing:border-box;"></div>
<div style="position:absolute;top:553px;font-size:10.65px;line-height:16px;color:#3a4658;white-space:pre;left:544.5px;">30 минут</div>
<div style="position:absolute;left:685px;top:548px;width:96px;height:24px;background:#fff;border-radius:5px;box-shadow:0 0 1.5px rgba(90,120,150,0.7),0 0.6px 1px rgba(70,90,110,0.45);"></div>
<div style="position:absolute;left:687px;top:550px;width:92px;height:20px;background:linear-gradient(180deg,#6a9ec7 0%,#5c8fba 50%,#5081ad 100%);border-radius:3.5px;"></div>
<div style="position:absolute;top:552px;font-size:11.3px;line-height:16px;color:#fff;white-space:pre;left:532.2px;width:400px;text-align:center;">Вывести отчёт</div>
<div style="position:absolute;left:784px;top:548px;width:96px;height:24px;background:#fff;border-radius:5px;box-shadow:0 0 1.5px rgba(90,120,150,0.7),0 0.6px 1px rgba(70,90,110,0.45);"></div>
<div style="position:absolute;left:786px;top:550px;width:92px;height:20px;background:linear-gradient(180deg,#6a9ec7 0%,#5c8fba 50%,#5081ad 100%);border-radius:3.5px;"></div>
<div style="position:absolute;top:552px;font-size:11.3px;line-height:16px;color:#fff;white-space:pre;left:631.3px;width:400px;text-align:center;">Экспорт</div>
<div style="position:absolute;top:582px;font-size:11.2px;line-height:16px;color:#3a4658;white-space:pre;left:237.8px;width:400px;text-align:center;">Версия 1.10.0</div>
<svg style="position:absolute;left:877px;top:588px" width="14" height="14" viewBox="0 0 14 14" shape-rendering="crispEdges"><rect x="10" y="1" width="2" height="2" fill="#4a6685"/><rect x="10" y="1" width="1" height="1" fill="#2f4a68"/><rect x="7" y="4" width="2" height="2" fill="#4a6685"/><rect x="7" y="4" width="1" height="1" fill="#2f4a68"/><rect x="10" y="4" width="2" height="2" fill="#4a6685"/><rect x="10" y="4" width="1" height="1" fill="#2f4a68"/><rect x="4" y="7" width="2" height="2" fill="#4a6685"/><rect x="4" y="7" width="1" height="1" fill="#2f4a68"/><rect x="7" y="7" width="2" height="2" fill="#4a6685"/><rect x="7" y="7" width="1" height="1" fill="#2f4a68"/><rect x="10" y="7" width="2" height="2" fill="#4a6685"/><rect x="10" y="7" width="1" height="1" fill="#2f4a68"/><rect x="1" y="10" width="2" height="2" fill="#4a6685"/><rect x="1" y="10" width="1" height="1" fill="#2f4a68"/><rect x="4" y="10" width="2" height="2" fill="#4a6685"/><rect x="4" y="10" width="1" height="1" fill="#2f4a68"/><rect x="7" y="10" width="2" height="2" fill="#4a6685"/><rect x="7" y="10" width="1" height="1" fill="#2f4a68"/><rect x="10" y="10" width="2" height="2" fill="#4a6685"/><rect x="10" y="10" width="1" height="1" fill="#2f4a68"/></svg>
</body></html>
